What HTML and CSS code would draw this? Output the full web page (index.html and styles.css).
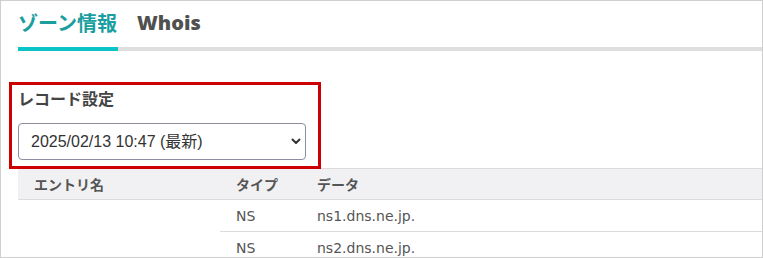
FILE: index.html
```html
<!DOCTYPE html>
<html lang="ja">
<head>
<meta charset="utf-8">
<link rel="stylesheet" href="styles.css">
</head>
<body>
<div class="frame">
  <div class="tabs">
    <div class="tab tab-active">ゾーン情報</div>
    <div class="tab tab-whois">Whois</div>
  </div>
  <div class="record">
    <div class="highlight"></div>
    <div class="record-title">レコード設定</div>
    <div class="select-wrap">
      <select class="select">
        <option>2025/02/13 10:47 (最新)</option>
      </select>
      <svg class="chevron" width="10" height="7" viewBox="0 0 10 7"><path d="M1.5 1.5 L5 5 L8.5 1.5" fill="none" stroke="#333" stroke-width="2" stroke-linecap="round" stroke-linejoin="round"/></svg>
    </div>
  </div>
  <table class="records">
    <thead>
      <tr>
        <th class="col-name">エントリ名</th>
        <th class="col-type">タイプ</th>
        <th class="col-data">データ</th>
      </tr>
    </thead>
    <tbody>
      <tr>
        <td class="name-cell" rowspan="2"></td>
        <td>NS</td>
        <td>ns1.dns.ne.jp.</td>
      </tr>
      <tr>
        <td>NS</td>
        <td>ns2.dns.ne.jp.</td>
      </tr>
    </tbody>
  </table>
</div>
</body>
</html>
```
FILE: styles.css
```css
html, body {
  margin: 0;
  padding: 0;
  background: #fff;
}
.frame {
  width: 763px;
  height: 258px;
  box-sizing: border-box;
  border: 1px solid #cfcfcf;
  padding-left: 17px;
  overflow: hidden;
  font-family: "Noto Sans CJK JP", "Noto Sans", sans-serif;
  color: #444;
}
.tabs {
  display: flex;
  gap: 19px;
  border-bottom: 4px solid #dedede;
}
.tab {
  padding-top: 8px;
  padding-bottom: 10px;
  line-height: 28px;
  font-size: 20px;
  font-weight: 700;
  margin-bottom: -4px;
  border-bottom: 4px solid transparent;
}
.tab-active {
  color: #1a9e9f;
  border-bottom-color: #0cc4c6;
  width: 100px;
}
.tab-whois {
  color: #505050;
  font-family: "Open Sans", "Noto Sans", sans-serif;
  font-weight: 800;
  font-size: 20px;
}
.record {
  position: relative;
  padding-top: 35px;
}
.highlight {
  position: absolute;
  left: -9px;
  top: 31px;
  width: 312px;
  height: 87px;
  box-sizing: border-box;
  border: 3px solid #cc0000;
  pointer-events: none;
}
.record-title {
  font-size: 16px;
  font-weight: 700;
  line-height: 24px;
  color: #444;
}
.select-wrap {
  position: relative;
  width: 288px;
  margin-top: 13px;
}
.select {
  appearance: none;
  -webkit-appearance: none;
  width: 288px;
  height: 37px;
  box-sizing: border-box;
  border: 1px solid #8f8da3;
  border-radius: 4px;
  background: #fff;
  padding: 0 0 0 12px;
  font-family: "Liberation Sans", "Noto Sans CJK JP", sans-serif;
  font-size: 16px;
  color: #333;
  display: block;
}
.chevron {
  position: absolute;
  right: 5px;
  top: 15px;
  pointer-events: none;
}
.records {
  margin-top: 8px;
  width: 744px;
  border-collapse: separate;
  border-spacing: 0;
  table-layout: fixed;
}
.records th {
  background: #f1f1f3;
  border-top: 1px solid #dcdcdc;
  border-bottom: 1px solid #dcdcdc;
  height: 30px;
  padding: 0 0 0 16px;
  text-align: left;
  font-size: 14px;
  font-weight: 700;
  color: #555;
  vertical-align: middle;
}
.col-name { width: 186px; }
.col-type { width: 65px; }
.records td {
  height: 31px;
  padding: 0 0 0 16px;
  border-bottom: 1px solid #dcdcdc;
  font-family: "DejaVu Sans", sans-serif;
  font-size: 14px;
  color: #555;
  vertical-align: middle;
}
.records td.name-cell {
  border-bottom: 1px solid #dcdcdc;
}
```
